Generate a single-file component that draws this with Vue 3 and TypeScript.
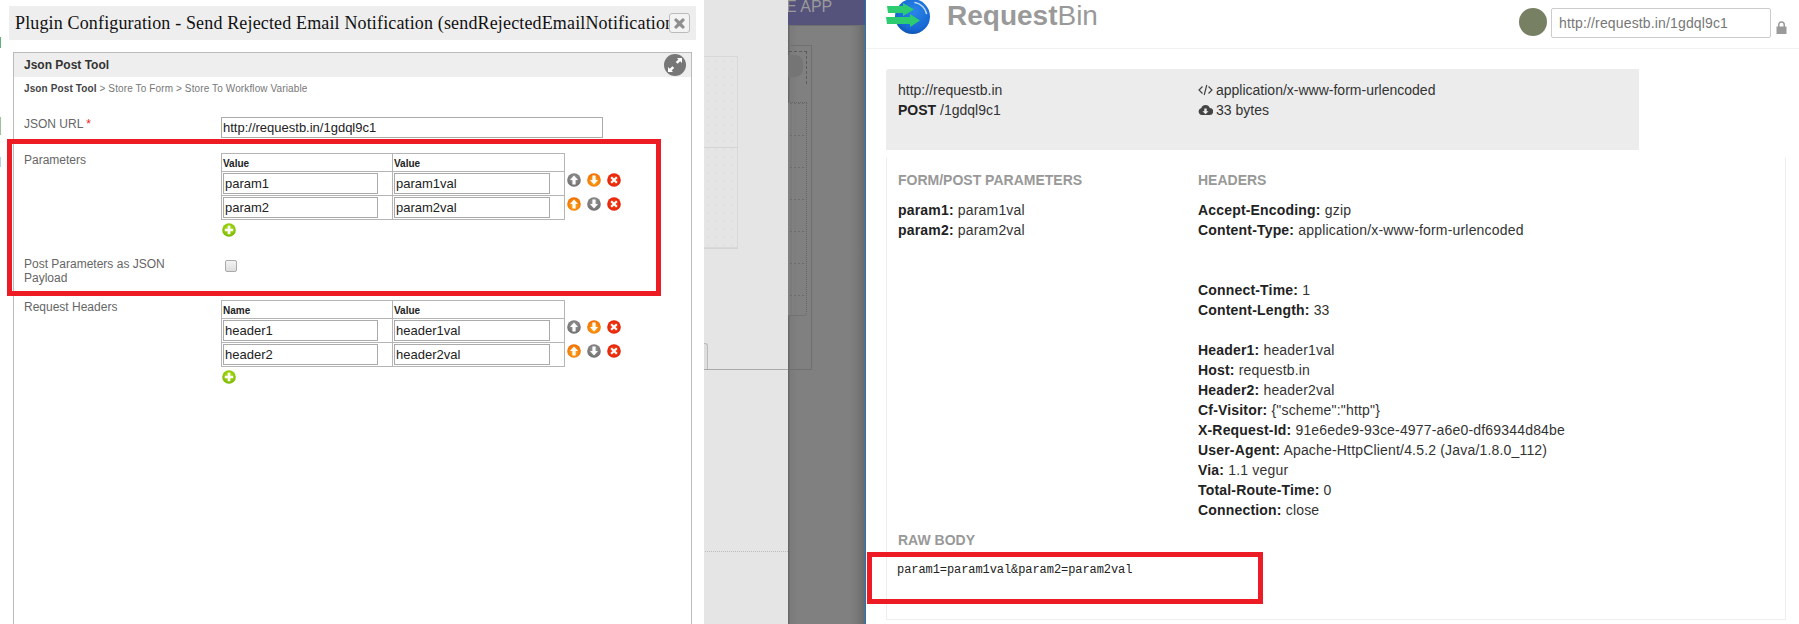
<script setup lang="ts">
type Kind = 'up' | 'down' | 'del'
interface Btn { kind: Kind; tone: 'grey' | 'orange' | 'red' }
interface Grid { heads: [string, string]; rows: [string, string][] }

const rowOne: Btn[] = [
  { kind: 'up', tone: 'grey' },
  { kind: 'down', tone: 'orange' },
  { kind: 'del', tone: 'red' },
]
const rowTwo: Btn[] = [
  { kind: 'up', tone: 'orange' },
  { kind: 'down', tone: 'grey' },
  { kind: 'del', tone: 'red' },
]
const btnRows: Btn[][] = [rowOne, rowTwo]

const paramGrid: Grid = {
  heads: ['Value', 'Value'],
  rows: [['param1', 'param1val'], ['param2', 'param2val']],
}
const headerGrid: Grid = {
  heads: ['Name', 'Value'],
  rows: [['header1', 'header1val'], ['header2', 'header2val']],
}

const glyphs: Record<Kind, string> = {
  up: 'M7 2.5 11 7 8.6 7 8.6 11.5 5.4 11.5 5.4 7 3 7Z',
  down: 'M7 11.5 3 7 5.4 7 5.4 2.5 8.6 2.5 8.6 7 11 7Z',
  del: 'M4.9 3.4 7 5.5 9.1 3.4 10.6 4.9 8.5 7 10.6 9.1 9.1 10.6 7 8.5 4.9 10.6 3.4 9.1 5.5 7 3.4 4.9Z',
}

const formParams: [string, string][] = [['param1', 'param1val'], ['param2', 'param2val']]
const headerGroups: [string, string][][] = [
  [['Accept-Encoding', 'gzip'], ['Content-Type', 'application/x-www-form-urlencoded']],
  [['Connect-Time', '1'], ['Content-Length', '33']],
  [
    ['Header1', 'header1val'],
    ['Host', 'requestb.in'],
    ['Header2', 'header2val'],
    ['Cf-Visitor', '{"scheme":"http"}'],
    ['X-Request-Id', '91e6ede9-93ce-4977-a6e0-df69344d84be'],
    ['User-Agent', 'Apache-HttpClient/4.5.2 (Java/1.8.0_112)'],
    ['Via', '1.1 vegur'],
    ['Total-Route-Time', '0'],
    ['Connection', 'close'],
  ],
]
</script>

<template>
  <div class="page">
    <svg class="defs" width="0" height="0" aria-hidden="true">
      <defs>
        <radialGradient id="g-grey" cx="50%" cy="40%" r="60%"><stop offset="0" stop-color="#9a9a9a" /><stop offset="1" stop-color="#6e6e6e" /></radialGradient>
        <radialGradient id="g-orange" cx="50%" cy="60%" r="60%"><stop offset="0" stop-color="#ffb020" /><stop offset="1" stop-color="#ee6a00" /></radialGradient>
        <radialGradient id="g-red" cx="50%" cy="50%" r="60%"><stop offset="0" stop-color="#ff4a20" /><stop offset="1" stop-color="#dd1a00" /></radialGradient>
        <radialGradient id="g-green" cx="50%" cy="40%" r="60%"><stop offset="0" stop-color="#b5e61d" /><stop offset="1" stop-color="#79b800" /></radialGradient>
        <radialGradient id="g-blue" cx="55%" cy="35%" r="70%"><stop offset="0" stop-color="#2a86ea" /><stop offset=".75" stop-color="#1667d2" /><stop offset="1" stop-color="#0f4fa8" /></radialGradient>
      </defs>
    </svg>

    <section class="plugin">
      <header class="dialog-title">
        <h1>Plugin Configuration - Send Rejected Email Notification (sendRejectedEmailNotification)</h1>
        <button class="close" type="button" aria-label="Close">
          <svg width="11" height="11" viewBox="0 0 11 11"><path d="M2 0 5.500 3 9 0 11 2 7.800 5.500 11 9 9 11 5.500 8 2 11 0 9 3.200 5.500 0 2Z" fill="#8f8f8f" /></svg>
        </button>
      </header>

      <div class="tool">
        <div class="tool-head">
          <strong>Json Post Tool</strong>
          <span class="expand">
            <svg width="22" height="22" viewBox="0 0 22 22"><path d="M13 4h5v5l-1.800-1.800-2.600 2.600-1.800-1.800 2.600-2.600ZM9 18H4v-5l1.800 1.800 2.600-2.600 1.800 1.800-2.600 2.600Z" fill="#fff" /></svg>
          </span>
        </div>
        <p class="crumb"><b>Json Post Tool</b> &gt; Store To Form &gt; Store To Workflow Variable</p>

        <div class="field url-field">
          <label>JSON URL <i>*</i></label>
          <input class="url" type="text" value="http://requestb.in/1gdql9c1" />
        </div>

        <div class="field params-field">
          <label>Parameters</label>
          <div>
            <div class="grid-line">
              <table>
                <thead><tr><th>{{ paramGrid.heads[0] }}</th><th>{{ paramGrid.heads[1] }}</th></tr></thead>
                <tbody>
                  <tr v-for="r in paramGrid.rows" :key="r[0]">
                    <td><input type="text" :value="r[0]" /></td>
                    <td><input type="text" :value="r[1]" /></td>
                  </tr>
                </tbody>
              </table>
              <div class="btns">
                <div v-for="(row, i) in btnRows" :key="i" class="btn-row">
                  <svg v-for="b in row" :key="b.kind" width="14" height="14" viewBox="0 0 14 14">
                    <circle cx="7" cy="7" r="6.8" :fill="`url(#g-${b.tone})`" />
                    <path :d="glyphs[b.kind]" fill="#fff" />
                  </svg>
                </div>
              </div>
            </div>
            <svg class="add" width="14" height="14" viewBox="0 0 14 14">
              <circle cx="7" cy="7" r="6.8" fill="url(#g-green)" />
              <path d="M5.700 2.800h2.600v2.900h2.900v2.600H8.300v2.900H5.700V8.300H2.800V5.700h2.900Z" fill="#fff" />
            </svg>
          </div>
        </div>

        <div class="field json-field">
          <label>Post Parameters as JSON Payload</label>
          <span class="check"></span>
        </div>

        <div class="field headers-field">
          <label>Request Headers</label>
          <div>
            <div class="grid-line">
              <table>
                <thead><tr><th>{{ headerGrid.heads[0] }}</th><th>{{ headerGrid.heads[1] }}</th></tr></thead>
                <tbody>
                  <tr v-for="r in headerGrid.rows" :key="r[0]">
                    <td><input type="text" :value="r[0]" /></td>
                    <td><input type="text" :value="r[1]" /></td>
                  </tr>
                </tbody>
              </table>
              <div class="btns">
                <div v-for="(row, i) in btnRows" :key="i" class="btn-row">
                  <svg v-for="b in row" :key="b.kind" width="14" height="14" viewBox="0 0 14 14">
                    <circle cx="7" cy="7" r="6.8" :fill="`url(#g-${b.tone})`" />
                    <path :d="glyphs[b.kind]" fill="#fff" />
                  </svg>
                </div>
              </div>
            </div>
            <svg class="add" width="14" height="14" viewBox="0 0 14 14">
              <circle cx="7" cy="7" r="6.8" fill="url(#g-green)" />
              <path d="M5.700 2.800h2.600v2.900h2.900v2.600H8.300v2.900H5.700V8.300H2.800V5.700h2.900Z" fill="#fff" />
            </svg>
          </div>
        </div>
      </div>
      <div class="mark mark-left"></div>
    </section>

    <aside class="backdrop-light">
      <div class="dot-box"></div>
      <span class="rule-147"></span>
      <span class="rule-248"></span>
      <span class="tab-edge"></span>
      <span class="rule-369"></span>
      <span class="rule-dotted"></span>
    </aside>

    <aside class="backdrop-dark">
      <div class="app-bar"><span>E APP</span></div>
      <div class="app-box"></div>
      <div class="app-dash"></div>
      <div class="app-blob"></div>
      <div class="app-grid"></div>
    </aside>

    <main class="bin">
      <header class="bin-top">
        <svg class="logo" width="46" height="36" viewBox="0 0 46 36">
          <circle cx="27.500" cy="16.500" r="17.500" fill="url(#g-blue)" />
          <path d="M30 2.500c6 1 10.500 6 11.500 11" fill="none" stroke="#bcd8f7" stroke-width="1.600" stroke-linecap="round" />
          <path d="M2 6H18V3L29 9.500 18 16V13H3Z" fill="#2ecc71" />
          <path d="M1 17H25V14L35 20.500 25 27V24H2Z" fill="#2ecc71" />
        </svg>
        <div class="brand"><b>Request</b>Bin</div>
        <div class="bin-tools">
          <span class="avatar"></span>
          <input type="text" value="http://requestb.in/1gdql9c1" />
          <svg width="11" height="13" viewBox="0 0 11 13"><path d="M2 5.500V3.800a3.500 3.500 0 0 1 7 0v1.700h1.500V13H.500V5.500ZM3.500 5.500h4V3.800a2 2 0 0 0-4 0Z" fill="#9a9a9a" fill-rule="evenodd" /></svg>
        </div>
      </header>

      <div class="info">
        <div class="info-col">
          <div>http://requestb.in</div>
          <div><b>POST</b> /1gdql9c1</div>
        </div>
        <div class="info-col">
          <div class="with-icon">
            <svg width="15" height="12" viewBox="0 0 15 12"><path d="M4.500 2.500 1 6l3.500 3.500M10.500 2.500 14 6l-3.500 3.500M8.800 1 6.200 11" fill="none" stroke="#444" stroke-width="1.200" /></svg>
            application/x-www-form-urlencoded
          </div>
          <div class="with-icon">
            <svg width="15" height="12" viewBox="0 0 15 12"><path d="M4 11a3.500 3.500 0 0 1-.7-6.900A4.500 4.500 0 0 1 11.800 4 3.500 3.500 0 0 1 11.500 11ZM6.300 4.500v2.800H4.500L7.500 10.300 10.500 7.300H8.700V4.500Z" fill="#444" fill-rule="evenodd" /></svg>
            33 bytes
          </div>
        </div>
      </div>

      <div class="detail">
        <div class="cols">
          <div class="col-left">
            <h2>FORM/POST PARAMETERS</h2>
            <div v-for="p in formParams" :key="p[0]" class="kv"><b>{{ p[0] }}:</b> {{ p[1] }}</div>
          </div>
          <div class="col-right">
            <h2>HEADERS</h2>
            <div v-for="(g, i) in headerGroups" :key="i" class="kv-group">
              <div v-for="h in g" :key="h[0]" class="kv"><b>{{ h[0] }}:</b> {{ h[1] }}</div>
            </div>
          </div>
        </div>
        <h2 class="raw-title">RAW BODY</h2>
        <pre class="raw">param1=param1val&amp;param2=param2val</pre>
        <div class="mark mark-right"></div>
      </div>
    </main>
  </div>
</template>

<style scoped>
.page {
  position: relative;
  display: flex;
  width: 1799px;
  height: 624px;
  overflow: hidden;
  background: #fff;
  font-family: "Liberation Sans", Arial, sans-serif;
}
.defs { position: absolute; }

/* ---- plugin dialog ---- */
.plugin {
  position: relative;
  flex: 0 0 704px;
  padding: 6px 0 0 9px;
  box-sizing: border-box;
  background-color: #fff;
  background-image:
    linear-gradient(#5cb17f, #5cb17f),
    linear-gradient(#9cc29c, #9cc29c),
    linear-gradient(#b5d3e6, #b5d3e6);
  background-size: 1px 11px, 1px 18px, 1px 10px;
  background-position: 0 37px, 0 117px, 0 157px;
  background-repeat: no-repeat;
}
.dialog-title {
  display: flex;
  align-items: center;
  width: 687px;
  height: 34px;
  padding-left: 6px;
  box-sizing: border-box;
  background: #eee;
}
.dialog-title h1 {
  flex: 0 0 654px;
  margin: 0;
  overflow: hidden;
  white-space: nowrap;
  font: 400 18px "Liberation Serif", "Times New Roman", serif;
  letter-spacing: .15px;
  color: #111;
}
.close {
  display: flex;
  align-items: center;
  justify-content: center;
  width: 21px;
  height: 20px;
  padding: 0;
  border: 1px solid #bbb;
  border-radius: 3px;
  background: #f3f3f3;
}
.tool {
  width: 679px;
  height: 620px;
  margin: 12px 0 0 4px;
  box-sizing: border-box;
  border: 1px solid #bbb;
}
.tool-head {
  display: flex;
  align-items: center;
  justify-content: space-between;
  height: 24px;
  padding: 0 5px 0 10px;
  background: #eee;
  font-size: 12px;
  color: #333;
}
.expand {
  display: flex;
  width: 22px;
  height: 22px;
  border-radius: 50%;
  background: #777;
}
.crumb {
  margin: 6px 0 0 10px;
  font-size: 10px;
  line-height: 11px;
  letter-spacing: .12px;
  color: #777;
}
.crumb b { color: #444; }
.field {
  display: grid;
  grid-template-columns: 197px 1fr;
  padding-left: 10px;
}
.field label {
  font-size: 12px;
  line-height: 14px;
  color: #666;
}
.field label i { font-style: normal; color: #e22; }
.url-field { margin-top: 23px; }
input {
  box-sizing: border-box;
  border: 1px solid #aaa;
  outline: none;
  background: #fff;
  font: 13px "Liberation Sans", Arial, sans-serif;
  color: #222;
}
.url {
  width: 382px;
  height: 21px;
  padding: 0 1px;
}
.params-field { margin-top: 15px; }
.headers-field { margin-top: 15px; }
.grid-line { display: flex; align-items: flex-start; }
table {
  width: 344px;
  border-collapse: collapse;
  table-layout: fixed;
}
th, td {
  padding: 0;
  border: 1px solid #b5b5b5;
  text-align: left;
}
th {
  height: 18px;
  padding: 2px 1px 0;
  box-sizing: border-box;
  font-size: 10px;
  font-weight: 700;
  color: #222;
}
td { padding: 1px 0 1px 1px; box-sizing: content-box; height: 21px; }
th:first-child, td:first-child { width: 171px; }
td input {
  display: block;
  height: 21px;
  padding: 0 1px;
}
td:first-child input { width: 155px; }
td:last-child input { width: 156px; }
.btns {
  margin: 20px 0 0 2px;
  display: flex;
  flex-direction: column;
  gap: 10px;
}
.btn-row {
  display: flex;
  gap: 6px;
  height: 14px;
}
.add {
  display: block;
  margin: 3px 0 0 1px;
}
.json-field { margin-top: 20px; }
.json-field label { width: 160px; }
.check {
  display: block;
  width: 12px;
  height: 12px;
  margin: 3px 0 0 4px;
  box-sizing: border-box;
  border: 1px solid #aaa;
  border-radius: 2px;
  background: linear-gradient(#f4f4f4, #ddd);
}
.mark {
  position: absolute;
  box-sizing: border-box;
  border: 5px solid #ed1c24;
  pointer-events: none;
}
.mark-left {
  left: 7px;
  top: 139px;
  width: 654px;
  height: 157px;
}
.mark-right {
  left: -20px;
  top: 394px;
  width: 396px;
  height: 52px;
}

/* ---- background fragments ---- */
.backdrop-light {
  position: relative;
  flex: 0 0 84px;
  background: #e5e5e5;
}
.dot-box {
  position: absolute;
  left: 0;
  top: 56px;
  width: 34px;
  height: 192px;
  box-sizing: border-box;
  border: 1px solid #d8d8d8;
  border-left: 0;
  background-image: radial-gradient(#dadada 0.6px, transparent 0.8px);
  background-size: 8px 8px;
}
.rule-147, .rule-248 {
  position: absolute;
  left: 0;
  width: 34px;
  height: 1px;
  background: #d4d4d4;
}
.rule-147 { top: 147px; }
.rule-248 { top: 248px; }
.tab-edge {
  position: absolute;
  left: 0;
  top: 343px;
  width: 4px;
  height: 26px;
  box-sizing: border-box;
  border: 1px solid #bbb;
  border-left: 0;
  border-bottom: 0;
  border-top-right-radius: 3px;
  background: #ddd;
}
.rule-369 {
  position: absolute;
  left: 0;
  top: 369px;
  width: 84px;
  height: 1px;
  background: #aaa;
}
.rule-dotted {
  position: absolute;
  left: 1px;
  top: 551px;
  width: 83px;
  border-top: 1px dotted #bbb;
}
.backdrop-dark {
  position: relative;
  flex: 0 0 77px;
  overflow: hidden;
  background: linear-gradient(90deg, #606060 0, #7a7a7a 2px, #808080 10px, #808080 62px, #777 70px, #6a6a6a 76px);
}
.app-bar {
  height: 26px;
  overflow: hidden;
  background: #55527c;
  border-bottom: 1px solid #6e6e6e;
  box-sizing: border-box;
}
.app-bar span {
  display: block;
  margin: -1px 0 0 -2px;
  font-size: 16px;
  line-height: 16px;
  white-space: nowrap;
  color: #9a9a9a;
}
.app-box {
  position: absolute;
  left: -4px;
  top: 45px;
  width: 28px;
  height: 325px;
  box-sizing: border-box;
  border: 1px solid #707070;
}
.app-dash {
  position: absolute;
  left: -4px;
  top: 51px;
  width: 23px;
  height: 33px;
  box-sizing: border-box;
  border: 1px dashed #5c5c5c;
  border-bottom: 0;
  border-left: 0;
}
.app-blob {
  position: absolute;
  left: -8px;
  top: 55px;
  width: 23px;
  height: 22px;
  border-radius: 8px;
  background: #757575;
}
.app-grid {
  position: absolute;
  left: -4px;
  top: 102px;
  width: 23px;
  height: 214px;
  box-sizing: border-box;
  border: 1px dotted #666;
  border-left: 0;
  border-bottom-right-radius: 3px;
  background-image:
    repeating-linear-gradient(90deg, #808080 0 2px, transparent 2px 4px),
    linear-gradient(#6c6c6c 1px, transparent 1px);
  background-size: 100% 100%, 100% 32px;
}

/* ---- RequestBin ---- */
.bin {
  flex: 1;
  box-sizing: border-box;
  border-left: 1px solid #1b75bb;
  background: #fff;
  font-size: 14px;
  line-height: 20px;
  color: #333;
}
.bin b { color: #222; }
.bin-top {
  display: flex;
  align-items: flex-start;
  height: 49px;
  box-sizing: border-box;
  padding-left: 19px;
  border-bottom: 1px solid #f2f2f2;
}
.logo { flex: none; }
.brand {
  margin: 0 0 0 16px;
  font-size: 28px;
  line-height: 32px;
  color: #999;
}
.brand b { color: #999; }
.bin-tools {
  display: flex;
  align-items: flex-start;
  margin-left: auto;
  padding: 8px 12px 0 0;
}
.avatar {
  width: 28px;
  height: 28px;
  border-radius: 50%;
  background: #788064;
}
.bin-tools input {
  width: 220px;
  height: 30px;
  margin-left: 4px;
  padding: 0 7px;
  border: 1px solid #ccc;
  border-radius: 2px;
  font-size: 14px;
  letter-spacing: .15px;
  color: #777;
}
.bin-tools svg { margin: 13px 0 0 5px; }
.info {
  display: flex;
  width: 753px;
  height: 81px;
  margin: 20px 0 8px 20px;
  padding: 11px 0 0 12px;
  box-sizing: border-box;
  border-top-left-radius: 3px;
  background: #ececec;
}
.info-col:first-child { width: 300px; }
.with-icon {
  display: flex;
  align-items: center;
  gap: 3px;
}
.detail {
  position: relative;
  width: 900px;
  height: 462px;
  margin-left: 20px;
  padding: 12px 0 0 11px;
  box-sizing: border-box;
  border: 1px solid #eee;
  border-top: 0;
}
.cols { display: flex; }
.col-left { width: 300px; flex: none; }
h2 {
  margin: 0;
  font-size: 14px;
  line-height: 20px;
  font-weight: 700;
  color: #999;
}
.col-left h2, .col-right h2 { margin-bottom: 10px; }
.kv { white-space: nowrap; letter-spacing: .18px; }
.kv-group + .kv-group { margin-top: 40px; }
.kv-group:last-child { margin-top: 20px; }
.raw-title { margin-top: 10px; }
.raw {
  margin: 10px 0 0 -1px;
  font: 12px/20px "Liberation Mono", "Courier New", monospace;
  letter-spacing: -.07px;
  color: #222;
}
</style>

<style>
html, body { margin: 0; overflow: hidden; }
</style>
